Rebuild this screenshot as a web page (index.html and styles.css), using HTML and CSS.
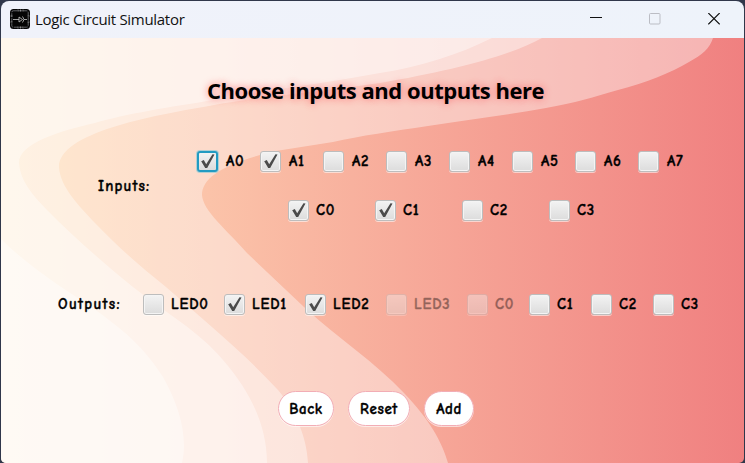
FILE: index.html
```html
<!DOCTYPE html>
<html lang="en">
<head>
<meta charset="utf-8">
<title>Logic Circuit Simulator</title>
<link rel="stylesheet" href="styles.css">
</head>
<body>
<div class="window">
  <header class="titlebar">
    <svg class="app-icon" width="20" height="20" viewBox="0 0 20 20">
      <rect width="20" height="20" rx="3.5" fill="#050505"/>
      <rect x="1.8" y="1.8" width="16.4" height="16.4" rx="1.5" fill="none" stroke="#8a8d92" stroke-width=".7" stroke-dasharray="4 1"/>
      <path d="M8 .5v2M10.500 .5v2M13 .5v2M8 17.500v2M10.500 17.500v2M13 17.500v2M.5 7h2M.5 13h2M17.500 7h2M17.500 13h2" stroke="#aaa" stroke-width=".7"/>
      <path d="M3 10.500h6M9 8v5l3.500-2.500zM12.500 7.500q3 3 0 6M14 10.500h3" fill="none" stroke="#c8c8c8" stroke-width=".8"/>
    </svg>
    <span class="caption">Logic Circuit Simulator</span>
    <div class="controls">
      <svg width="12" height="12" viewBox="0 0 12 12"><path d="M0 4.500h12" stroke="#111"/></svg>
      <svg width="12" height="12" viewBox="0 0 12 12"><rect x=".5" y=".5" width="10.500" height="10.500" rx="1" fill="none" stroke="#bbbdc4"/></svg>
      <svg width="12" height="12" viewBox="0 0 12 12"><path d="M.3 0l11.400 11.400M11.700 0L.3 11.400" stroke="#111" stroke-width="1.200"/></svg>
    </div>
  </header>
  <main class="scene">
    <svg class="waves" width="743" height="425" viewBox="1 38 743 425">
      <defs>
        <linearGradient id="base" x1="0" x2="1" y1="0" y2="0"><stop offset="0" stop-color="#ffdcb0"/><stop offset=".28" stop-color="#fbc3a9"/><stop offset="1" stop-color="#f08080"/></linearGradient>
      </defs>
      <rect x="1" y="38" width="743" height="425" fill="url(#base)"/>
      <g fill="#fff" fill-opacity=".4">
        <path d="M0 38H713C710 48 702 55 689 62C671 73 645 83 618 90C594 97 575 103 546 108C508 115 466 120 428 126C393 131 360 136 333 142L276 151C225 163 202 177 202 195C203 211 226 229 247 253L304 307C340 340 375 362 404 393C430 420 442 442 448 463H0Z"/>
        <path d="M0 38H542C510 56 450 71 380 83C320 92 262 96 209 106C150 116 59 133 59 167C60 187 80 207 95 223C120 249 140 266 166 287C205 321 245 354 278 390C296 411 307 438 308 463H0Z"/>
        <path d="M0 38H492C460 54 420 67 380 73C325 83 270 90 214 100C170 107 125 114 95 123C60 131 19 143 19 163C20 180 32 195 47 210C75 238 100 260 133 287C166 313 200 332 223 360C250 391 267 425 267 463H0Z"/>
        <path d="M0 238C14 252 29 264 47 277C72 295 90 305 109 320C135 339 151 358 163 377C180 407 188 438 182 463H0Z"/>
      </g>
    </svg>
    <h1>Choose inputs and outputs here</h1>
    <section class="inputs">
      <span class="label label-inputs">Inputs:</span>
      <div class="input-rows">
        <div class="row row-a">
          <label class="check on focus"><i></i><b>A0</b></label>
          <label class="check on"><i></i><b>A1</b></label>
          <label class="check"><i></i><b>A2</b></label>
          <label class="check"><i></i><b>A3</b></label>
          <label class="check"><i></i><b>A4</b></label>
          <label class="check"><i></i><b>A5</b></label>
          <label class="check"><i></i><b>A6</b></label>
          <label class="check"><i></i><b>A7</b></label>
        </div>
        <div class="row row-c">
          <label class="check on"><i></i><b>C0</b></label>
          <label class="check on"><i></i><b>C1</b></label>
          <label class="check"><i></i><b>C2</b></label>
          <label class="check"><i></i><b>C3</b></label>
        </div>
      </div>
    </section>
    <section class="outputs">
      <span class="label label-outputs">Outputs:</span>
      <div class="row row-out">
        <label class="check"><i></i><b>LED0</b></label>
        <label class="check on"><i></i><b>LED1</b></label>
        <label class="check on"><i></i><b>LED2</b></label>
        <label class="check off"><i></i><b>LED3</b></label>
        <label class="check off"><i></i><b>C0</b></label>
        <label class="check"><i></i><b>C1</b></label>
        <label class="check"><i></i><b>C2</b></label>
        <label class="check"><i></i><b>C3</b></label>
      </div>
    </section>
    <footer class="actions">
      <button class="back">Back</button>
      <button class="reset">Reset</button>
      <button class="add">Add</button>
    </footer>
  </main>
</div>
<script src="checks.js"></script>
</body>
</html>
```
FILE: styles.css
```css
* { box-sizing: border-box; }
body { margin: 0; width: 745px; height: 463px; overflow: hidden; background: #30374a; }
.window { display: flex; flex-direction: column; width: 743px; height: 462px; margin: 1px 1px 0; border-radius: 8px 8px 5px 5px; overflow: hidden; }
.titlebar { display: flex; align-items: center; height: 37px; padding-left: 9px; background: linear-gradient(90deg, #f0f2fa, #eef3fa); }
.app-icon { flex: none; margin-top: -1px; }
.caption { margin: -1px 0 0 5px; font: 15px/20px "Open Sans", "Noto Sans", sans-serif; letter-spacing: -.3px; color: #111; white-space: nowrap; }
.controls { display: flex; gap: 47px; margin: -1px 0 0 auto; padding-right: 24px; }
.scene { position: relative; z-index: 0; display: flex; flex-direction: column; height: 425px; }
.waves { position: absolute; top: 0; left: 0; z-index: -1; }
h1 { height: 30px; margin: 37px 0 0 206px; font: 700 22px/30px "Open Sans", "Noto Sans", sans-serif; letter-spacing: -.47px; color: #000; white-space: nowrap; text-shadow: 0 0 6px rgba(255,75,85,.45), 0 0 10px rgba(255,90,95,.3); }
.label, .check b, button { font: 700 15px/20px "Comic Sans MS", "Comic Neue", Lato, sans-serif; letter-spacing: .6px; color: #000; white-space: nowrap; -webkit-text-stroke: .35px #000; }
.inputs { display: flex; align-items: center; margin-top: 46px; height: 69px; }
.label-inputs { width: 99px; margin-left: 97px; letter-spacing: 1.150px; }
.input-rows { display: flex; flex-direction: column; gap: 29px; }
.row { display: flex; }
.check { display: flex; align-items: center; height: 20px; }
.check b { letter-spacing: .8px; }
.check i { flex: none; width: 21px; height: 21px; margin-right: 8px; border: 1px solid #bdbdbd; border-radius: 3px; background: linear-gradient(#f3f3f3, #dcdcdc); box-shadow: inset 0 0 0 1px #f4f4f4, 0 1px 0 rgba(255,255,255,.55); }
.check.on i svg { display: block; }
.check.focus i { border: 2px solid #229bc2; box-shadow: 0 0 0 1px rgba(100,195,220,.5); }
.check.focus i svg { margin: -1px; }
.check.off { opacity: .4; }
.row-a .check { width: 63px; }
.row-c { margin-left: 91px; }
.row-c .check { width: 87px; }
.row-c .check i { margin-right: 7px; }
.row-out .check { width: 62px; }
.row-out .check:nth-child(-n+4) { width: 81px; }
.row-out .check i { margin-right: 7px; }
.outputs { display: flex; align-items: center; height: 20px; margin-top: 74px; }
.label-outputs { width: 85px; margin-left: 57px; letter-spacing: 1.350px; }
.actions { display: flex; gap: 14px; margin: 77px 0 0 277px; }
button { height: 35px; padding: 0; border: 1px solid #f2adb5; border-radius: 18px; background: #fff; box-shadow: 0 1px 0 rgba(255,255,255,.6); }
.back { width: 56px; }
.reset { width: 62px; }
.add { width: 50px; }
```
FILE: checks.js
```js
document.querySelectorAll('.check.on i').forEach(function (box) {
  box.innerHTML = '<svg width="19" height="19" viewBox="0 0 19 19"><path d="M3.200 9.200l2.600-1.200 2.400 4.200L14.500 2.300l2 .3L9.200 16H7.200z" fill="#4b4b4b"/></svg>';
});
```
